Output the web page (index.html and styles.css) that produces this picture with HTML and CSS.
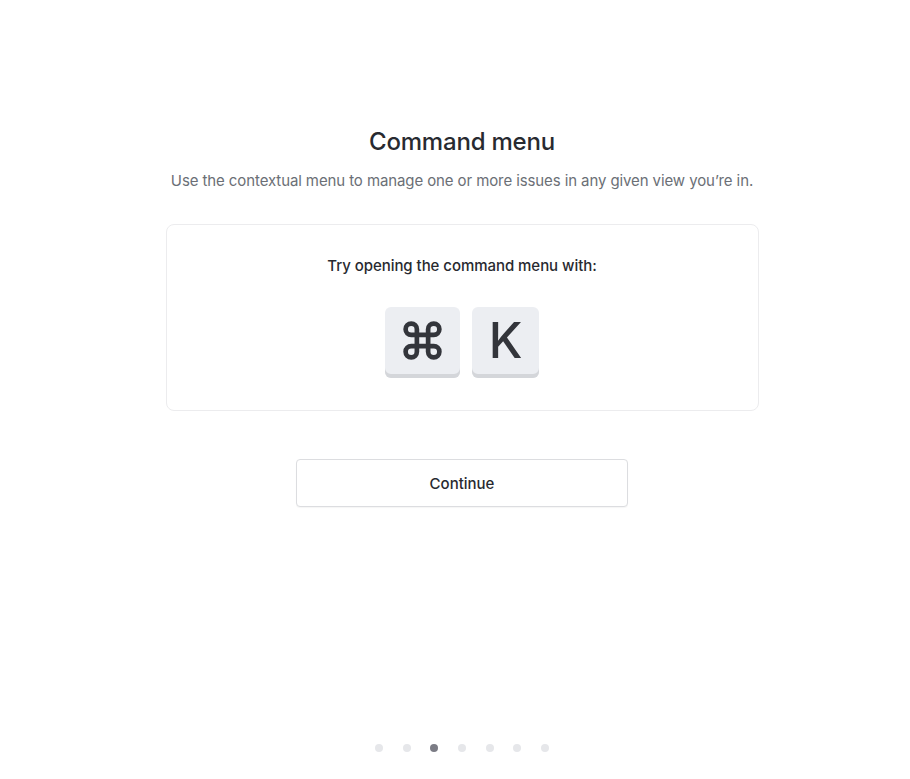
FILE: index.html
```html
<!DOCTYPE html>
<html lang="en">
<head>
<meta charset="utf-8">
<title>Command menu</title>
<link rel="stylesheet" href="styles.css">
</head>
<body>
<div class="page">
  <h1 class="title">Command menu</h1>
  <p class="subtitle">Use the contextual menu to manage one or more issues in any given view you’re in.</p>
  <div class="card">
    <p class="card-text">Try opening the command menu with:</p>
    <div class="keys">
      <div class="key key-cmd" aria-label="Command">
        <svg class="cmd-icon" viewBox="0 0 24 24" width="45" height="45" aria-hidden="true">
          <path d="M15 6v12a3 3 0 1 0 3-3H6a3 3 0 1 0 3 3V6a3 3 0 1 0-3 3h12a3 3 0 1 0-3-3" fill="none" stroke="currentColor" stroke-width="2.5" stroke-linecap="round" stroke-linejoin="round"/>
        </svg>
      </div>
      <div class="key key-k">K</div>
    </div>
  </div>
  <button class="continue">Continue</button>
  <div class="dots">
    <span class="dot"></span>
    <span class="dot"></span>
    <span class="dot active"></span>
    <span class="dot"></span>
    <span class="dot"></span>
    <span class="dot"></span>
    <span class="dot"></span>
  </div>
</div>
</body>
</html>
```
FILE: styles.css
```css
* { box-sizing: border-box; }
html, body { margin: 0; padding: 0; background: #fff; }
body {
  font-family: Inter, "Noto Sans", "Liberation Sans", sans-serif;
  color: #282a30;
}
.page {
  min-height: 100vh;
  display: flex;
  flex-direction: column;
  align-items: center;
  padding-top: 127px;
  padding-bottom: 27px;
  padding-left: 14px;
}
.title {
  margin: 0;
  font-size: 24px;
  line-height: 30px;
  font-weight: 500;
  color: #282a30;
  letter-spacing: -0.2px;
}
.subtitle {
  margin: 14px 0 0;
  font-size: 15px;
  line-height: 20px;
  color: #6b6f76;
  font-weight: 400;
  letter-spacing: -0.1px;
}
.card {
  margin-top: 33px;
  width: 593px;
  border: 1px solid #ececee;
  border-radius: 8px;
  padding: 31px 0 32px;
  display: flex;
  flex-direction: column;
  align-items: center;
}
.card-text {
  margin: 0;
  font-size: 15px;
  line-height: 20px;
  font-weight: 500;
  color: #282a30;
  letter-spacing: -0.05px;
}
.keys {
  margin-top: 31px;
  display: flex;
  gap: 12px;
}
.key {
  height: 71px;
  background: #eceef2;
  border-radius: 6px;
  box-shadow: inset 0 -4px 0 #d4d6da;
  display: flex;
  align-items: center;
  justify-content: center;
  padding-bottom: 4px;
  color: #33353b;
}
.key-cmd { width: 75px; }
.cmd-icon { display: block; }
.key-k { width: 67px; font-size: 49px; font-weight: 500; line-height: 1; }
.continue {
  margin-top: 48px;
  width: 332px;
  height: 48px;
  background: #fff;
  border: 1px solid #dcdde0;
  border-radius: 4px;
  font-family: inherit;
  font-size: 15px;
  font-weight: 500;
  color: #282a30;
  box-shadow: 0 1px 1px rgba(0,0,0,0.04);
}
.dots {
  margin-top: auto;
  display: flex;
  gap: 19.7px;
}
.dot {
  width: 8px;
  height: 8px;
  border-radius: 50%;
  background: #e6e7ea;
}
.dot.active { background: #7b7c85; }
```
